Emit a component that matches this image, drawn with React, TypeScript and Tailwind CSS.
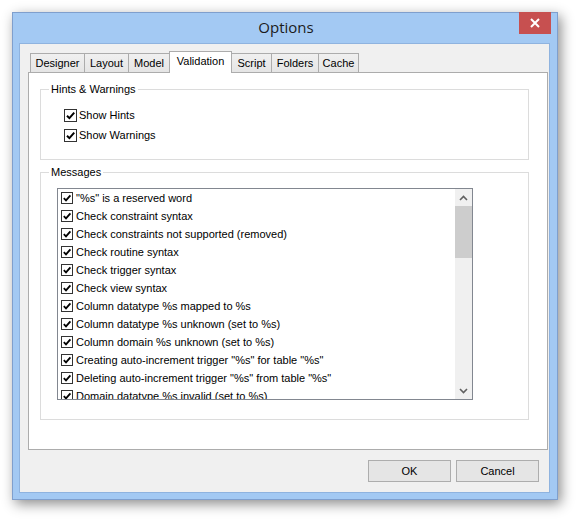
import React from 'react';

const tabs = [
  { name: 'Designer', w: 'w-[55px]' },
  { name: 'Layout', w: 'w-[45px]' },
  { name: 'Model', w: 'w-[42px]' },
  { name: 'Validation', w: 'w-[63px]', active: true },
  { name: 'Script', w: 'w-[41px]' },
  { name: 'Folders', w: 'w-[48px]' },
  { name: 'Cache', w: 'w-[41px]' },
];

const messages = [
  '"%s" is a reserved word',
  'Check constraint syntax',
  'Check constraints not supported (removed)',
  'Check routine syntax',
  'Check trigger syntax',
  'Check view syntax',
  'Column datatype %s mapped to %s',
  'Column datatype %s unknown (set to %s)',
  'Column domain %s unknown (set to %s)',
  'Creating auto-increment trigger "%s" for table "%s"',
  'Deleting auto-increment trigger "%s" from table "%s"',
  'Domain datatype %s invalid (set to %s)',
];

function CheckBox({ size = 'w-[13px] h-[13px]' }: { size?: string }) {
  return (
    <span className={`${size} shrink-0 border border-[#333333] bg-white flex items-center justify-center`}>
      <svg viewBox="0 0 10 10" className="w-full h-full">
        <path d="M1.8 5.2 L4 7.4 L8.4 2.4" fill="none" stroke="#000" strokeWidth="1.8" />
      </svg>
    </span>
  );
}

function Chevron({ down }: { down?: boolean }) {
  return (
    <svg width="9" height="6" viewBox="0 0 9 6" className={down ? 'rotate-180' : ''}>
      <path d="M1 5 L4.5 1.5 L8 5" fill="none" stroke="#606060" strokeWidth="1.6" />
    </svg>
  );
}

export default function App() {
  return (
    <div className="w-[577px] h-[520px] bg-white overflow-hidden font-['Liberation_Sans',Arial,sans-serif] text-[11px] text-black">
      <div className="relative ml-[12px] mt-[12px] w-[546px] h-[488px] border border-[#7f9fcd] bg-[#a3c9f3] shadow-[3px_4px_12px_rgba(0,0,0,0.45)] flex flex-col">
        {/* title bar */}
        <div className="h-[30px] flex items-center justify-center">
          <span className="font-['Open_Sans',sans-serif] text-[15px] text-[#1b1b1b] -mt-[1px] pl-[2px]">Options</span>
        </div>
        <div className="absolute top-[-1px] right-[6px] w-[32px] h-[22px] bg-[#c75050] flex items-center justify-center">
          <svg width="10" height="10" viewBox="0 0 10 10">
            <path d="M1 1 L9 9 M9 1 L1 9" stroke="#fff" strokeWidth="2" />
          </svg>
        </div>

        {/* client */}
        <div className="ml-[6px] w-[531px] h-[450px] border border-[#8fb3df] bg-[#f0f0f0] pl-[8px] pt-[7px]">
          {/* tabs */}
          <div className="relative z-10 ml-[2px] h-[21px] flex items-end">
            {tabs.map((t, i) =>
              t.active ? (
                <div
                  key={t.name}
                  className={`${t.w} h-[22px] -mb-px -ml-px border border-b-0 border-[#acacac] bg-white flex justify-center pt-[1px]`}
                >
                  {t.name}
                </div>
              ) : (
                <div
                  key={t.name}
                  className={`${t.w} h-[19px] ${i === 0 ? '' : '-ml-px'} border border-b-0 border-[#acacac] bg-gradient-to-b from-[#f0f0f0] to-[#e5e5e5] flex justify-center pt-[1px]`}
                >
                  {t.name}
                </div>
              )
            )}
          </div>

          {/* tab page */}
          <div className="w-[520px] h-[378px] border border-[#acacac] bg-white pl-[11px] pt-[10px]">
            <fieldset className="w-[489px] h-[77px] border border-[#dcdcdc]">
              <legend className="ml-[8px] px-[2px] leading-[13px]">Hints &amp; Warnings</legend>
              <div className="pt-[9px] pl-[23px]">
                {['Show Hints', 'Show Warnings'].map((l) => (
                  <div key={l} className="h-[20px] flex items-center">
                    <CheckBox />
                    <span className="ml-[2px]">{l}</span>
                  </div>
                ))}
              </div>
            </fieldset>

            <fieldset className="mt-[6px] w-[489px] h-[254px] border border-[#dcdcdc]">
              <legend className="ml-[8px] px-[2px] leading-[13px]">Messages</legend>
              <div className="mt-[9px] ml-[16px] w-[416px] h-[212px] border border-[#828790] flex">
                <div className="flex-1 overflow-hidden">
                  {messages.map((m) => (
                    <div key={m} className="h-[18px] flex items-center pl-[3px] whitespace-nowrap">
                      <CheckBox size="w-[12px] h-[12px]" />
                      <span className="ml-[3px]">{m}</span>
                    </div>
                  ))}
                </div>
                <div className="w-[17px] bg-[#f0f0f0] flex flex-col">
                  <div className="h-[17px] flex items-center justify-center">
                    <Chevron />
                  </div>
                  <div className="h-[52px] bg-[#cdcdcd]" />
                  <div className="flex-1" />
                  <div className="h-[17px] flex items-center justify-center">
                    <Chevron down />
                  </div>
                </div>
              </div>
            </fieldset>
          </div>

          {/* buttons */}
          <div className="mt-[10px] pr-[10px] flex justify-end gap-[5px]">
            <button className="w-[83px] h-[22px] border border-[#adadad] bg-[#e5e5e5] text-[11px]">OK</button>
            <button className="w-[83px] h-[22px] border border-[#adadad] bg-[#e5e5e5] text-[11px]">Cancel</button>
          </div>
        </div>
      </div>
    </div>
  );
}
